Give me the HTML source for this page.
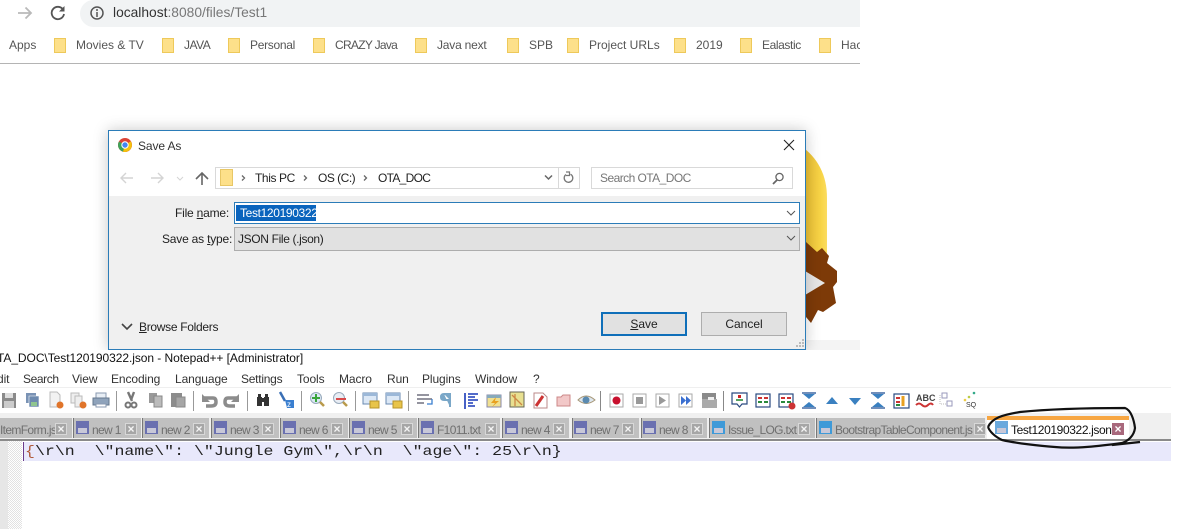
<!DOCTYPE html>
<html><head><meta charset="utf-8"><style>
html,body{margin:0;padding:0;background:#fff}
#p{position:relative;width:1195px;height:529px;overflow:hidden;background:#fff;font-family:"Liberation Sans",sans-serif;font-size:12px;color:#222}
#p div,#p span.a,#p svg.a{position:absolute}
.t{white-space:nowrap;line-height:16px}
.bm{top:37px;color:#555;font-size:12px}
.fd{top:38px;width:10px;height:13px;background:#fde08a;border:1px solid #eec95a;box-sizing:content-box}
.m{top:371px;color:#333;font-size:12px;letter-spacing:-.1px}
.tab{top:418px;height:20px;background:#c0c0c0;border-left:1px solid #777;border-right:1px solid #eee}
.tt{top:422px;color:#6f6f6f;font-size:12px;letter-spacing:-.65px}
.x{top:423px;width:10px;height:10px;background:#a6a6a6;border:1px solid #d8d8d8;color:#f4f4f4;font:bold 12px/10px "Liberation Sans",sans-serif;text-align:center}
.sv{top:421px;width:13px;height:13px;background:#6a70b0}
.sv:after{content:"";position:absolute;left:2px;right:2px;bottom:1px;height:5px;background:#c8c8d8}
u{text-decoration:underline}
</style></head><body><div id="p">

<!-- chrome -->
<div style="left:80px;top:0;width:780px;height:27px;background:#f1f3f4;border-radius:14px 0 0 14px"></div>
<svg class="a" style="left:16px;top:4px" width="18" height="18" viewBox="0 0 18 18"><path d="M2 9H15M9.500 3.500L15 9L9.500 14.500" fill="none" stroke="#b9b9b9" stroke-width="1.800"/></svg>
<svg class="a" style="left:49px;top:4px" width="18" height="18" viewBox="0 0 18 18"><path d="M14 5.500A6.200 6.200 0 1 0 15 10" fill="none" stroke="#555" stroke-width="1.800"/><path d="M15.500 2V7.500H10Z" fill="#555"/></svg>
<svg class="a" style="left:89px;top:5px" width="16" height="16" viewBox="0 0 16 16"><circle cx="8" cy="8" r="6" fill="none" stroke="#555" stroke-width="1.500"/><path d="M8 7V12M8 4V6" stroke="#555" stroke-width="1.500"/></svg>
<div class="t" style="left:113px;top:5px;font-size:13.800px;color:#777"><span style="color:#333">localhost</span>:8080/files/Test1</div>

<div class="t bm" style="left:9px">Apps</div>
<div class="fd" style="left:54px"></div><div class="t bm" style="left:76px">Movies &amp; TV</div>
<div class="fd" style="left:162px"></div><div class="t bm" style="left:184px;letter-spacing:-.5px">JAVA</div>
<div class="fd" style="left:228px"></div><div class="t bm" style="left:250px;letter-spacing:-.3px">Personal</div>
<div class="fd" style="left:313px"></div><div class="t bm" style="left:335px;letter-spacing:-.7px">CRAZY Java</div>
<div class="fd" style="left:415px"></div><div class="t bm" style="left:437px;letter-spacing:-.2px">Java next</div>
<div class="fd" style="left:507px"></div><div class="t bm" style="left:529px">SPB</div>
<div class="fd" style="left:567px"></div><div class="t bm" style="left:589px">Project URLs</div>
<div class="fd" style="left:674px"></div><div class="t bm" style="left:696px">2019</div>
<div class="fd" style="left:740px"></div><div class="t bm" style="left:762px;letter-spacing:-.4px">Ealastic</div>
<div class="fd" style="left:819px"></div><div class="t bm" style="left:841px;width:19px;overflow:hidden">Hack</div>
<div style="left:0;top:63px;width:860px;height:1px;background:#b4b4b4"></div>

<!-- background art -->
<svg class="a" style="left:780px;top:130px" width="90" height="230" viewBox="0 0 90 230">
<defs><linearGradient id="y" x1="0" x2="1" y1="0" y2="0"><stop offset="0" stop-color="#e8b92e"/><stop offset=".8" stop-color="#f8d548"/><stop offset="1" stop-color="#fbdc60"/></linearGradient></defs>
<path d="M20 15C38 28 47 45 47 68V126H20Z" fill="url(#y)"/>
<path d="M20 108L26 112L37 122L42 118L49 126L47 133L57 141L57 152L53 157L56 173L43 182L38 180L31 193L26 187L20 188Z" fill="#7d3a08"/>
<path d="M20 138L45 153L20 168Z" fill="#e6e6e6"/>
<rect x="26" y="210" width="54" height="10" fill="#f4f4f4"/>
</svg>

<!-- dialog -->
<div style="left:108px;top:130px;width:698px;height:220px;box-shadow:0 0 14px rgba(0,0,0,.22)"></div>
<div style="left:108px;top:130px;width:696px;height:218px;background:#fff;border:1px solid #2b7cb8"></div>
<div style="left:109px;top:196px;width:696px;height:153px;background:#f0f0f0"></div>
<svg class="a" style="left:118px;top:138px" width="14" height="14" viewBox="0 0 14 14"><circle cx="7" cy="7" r="7" fill="#db4437"/><path d="M7 7L1 3.500A7 7 0 0 0 5 13.700Z" fill="#3da35a"/><path d="M7 7L12.800 3.200A7 7 0 0 1 5 13.700Z" fill="#f4c20d"/><circle cx="7" cy="7" r="3.200" fill="#4285f4" stroke="#fff"/></svg>
<div class="t" style="left:138px;top:138px;color:#333;letter-spacing:-.1px">Save As</div>
<svg class="a" style="left:783px;top:139px" width="12" height="12" viewBox="0 0 12 12"><path d="M1 1L11 11M11 1L1 11" stroke="#222" stroke-width="1.100"/></svg>

<svg class="a" style="left:120px;top:171px" width="90" height="14" viewBox="0 0 90 14"><path d="M1 7H13M6 2L1 7L6 12M31 7H43M38 2L43 7L38 12" fill="none" stroke="#d4d4d4" stroke-width="1.400"/><path d="M57 6L60 9L63 6" fill="none" stroke="#d4d4d4"/><path d="M82 14V2M76 8L82 2L88 8" fill="none" stroke="#666" stroke-width="1.600"/></svg>
<div style="left:215px;top:167px;width:363px;height:20px;border:1px solid #d9d9d9;background:#fff"></div>
<div style="left:220px;top:169px;width:11px;height:15px;background:#fde08a;border:1px solid #e8c766"></div>
<div style="left:558px;top:168px;width:1px;height:20px;background:#d9d9d9"></div>
<svg class="a" style="left:240px;top:174px" width="130" height="8" viewBox="0 0 130 8"><path d="M2 1.500L4.500 4L2 6.500M64 1.500L66.500 4L64 6.500M124 1.500L126.500 4L124 6.500" fill="none" stroke="#666" stroke-width="1.300"/></svg>
<div class="t" style="left:255px;top:170px;color:#222;letter-spacing:-.4px">This PC</div>
<div class="t" style="left:318px;top:170px;color:#222;letter-spacing:-.5px">OS (C:)</div>
<div class="t" style="left:378px;top:170px;color:#222;letter-spacing:-.7px">OTA_DOC</div>
<svg class="a" style="left:544px;top:174px" width="9" height="7" viewBox="0 0 9 7"><path d="M1 1.500L4.500 5L8 1.500" fill="none" stroke="#666" stroke-width="1.500"/></svg>
<svg class="a" style="left:563px;top:171px" width="12" height="13" viewBox="0 0 12 13"><path d="M3 3.500A4.300 4.300 0 1 0 7.500 3.200" fill="none" stroke="#777" stroke-width="1.300"/><path d="M3 1H6.500V4.500H3" fill="none" stroke="#777" stroke-width="1.200"/></svg>
<div style="left:591px;top:167px;width:200px;height:20px;border:1px solid #d9d9d9;background:#fff"></div>
<div class="t" style="left:600px;top:170px;color:#777;letter-spacing:-.55px">Search OTA_DOC</div>
<svg class="a" style="left:771px;top:172px" width="14" height="13" viewBox="0 0 14 13"><circle cx="8.500" cy="5" r="3.600" fill="none" stroke="#666" stroke-width="1.300"/><path d="M6 8L2 12" stroke="#666" stroke-width="1.800"/></svg>

<div class="t" style="left:175px;top:205px;color:#222;letter-spacing:-.2px">File <u>n</u>ame:</div>
<div style="left:234px;top:202px;width:564px;height:20px;background:#fff;border:1px solid #2b7cb8"></div>
<div class="t" style="left:236px;top:205px;width:76px;padding-left:4px;background:#0a64bd;color:#fff;letter-spacing:-.35px">Test120190322</div>
<svg class="a" style="left:786px;top:210px" width="10" height="6" viewBox="0 0 10 6"><path d="M1 1L5 5L9 1" fill="none" stroke="#555"/></svg>
<div class="t" style="left:162px;top:231px;color:#222;letter-spacing:-.2px">Save as <u>t</u>ype:</div>
<div style="left:234px;top:227px;width:564px;height:22px;background:#e1e1e1;border:1px solid #adadad"></div>
<div class="t" style="left:238px;top:231px;color:#222;letter-spacing:-.35px">JSON File (.json)</div>
<svg class="a" style="left:786px;top:235px" width="10" height="6" viewBox="0 0 10 6"><path d="M1 1L5 5L9 1" fill="none" stroke="#555"/></svg>

<svg class="a" style="left:121px;top:323px" width="12" height="8" viewBox="0 0 12 8"><path d="M1 1L6 6L11 1" fill="none" stroke="#444" stroke-width="1.600"/></svg>
<div class="t" style="left:139px;top:319px;color:#222;letter-spacing:-.3px"><u>B</u>rowse Folders</div>
<div style="left:601px;top:312px;width:82px;height:20px;background:#e1e1e1;border:2px solid #0f6fb9"></div>
<div class="t" style="left:601px;top:316px;width:86px;text-align:center;color:#222"><u>S</u>ave</div>
<div style="left:701px;top:312px;width:84px;height:22px;background:#e1e1e1;border:1px solid #adadad"></div>
<div class="t" style="left:701px;top:316px;width:86px;text-align:center;color:#222">Cancel</div>
<svg class="a" style="left:794px;top:338px" width="10" height="10"><path d="M8 1h2v2H8zM5 4h2v2H5zM8 4h2v2H8zM2 7h2v2H2zM5 7h2v2H5zM8 7h2v2H8z" fill="#bbb"/></svg>

<!-- notepad++ -->
<div style="left:0;top:350px;width:1171px;height:179px;background:#fff"></div>
<div class="t" style="left:-3px;top:350px;color:#111;font-size:12px;letter-spacing:-.06px">TA_DOC\Test120190322.json - Notepad++ [Administrator]</div>
<div class="t m" style="left:-3px">dit</div>
<div class="t m" style="left:23px;letter-spacing:-.4px">Search</div>
<div class="t m" style="left:72px">View</div>
<div class="t m" style="left:111px">Encoding</div>
<div class="t m" style="left:175px">Language</div>
<div class="t m" style="left:241px;letter-spacing:-.25px">Settings</div>
<div class="t m" style="left:297px">Tools</div>
<div class="t m" style="left:339px">Macro</div>
<div class="t m" style="left:387px">Run</div>
<div class="t m" style="left:422px">Plugins</div>
<div class="t m" style="left:475px">Window</div>
<div class="t m" style="left:533px">?</div>

<div style="left:0;top:387px;width:1171px;height:1px;background:#efefef"></div>
<div style="left:0;top:413px;width:1171px;height:26px;background:#f0f0f0"></div>

<svg class="a" style="left:0;top:390px" width="1000" height="22" viewBox="0 0 1000 22">
<path d="M2 3H16V18H2Z" fill="#8a8a8a"/><rect x="5" y="3" width="8" height="5" fill="#ddd"/><rect x="4" y="11" width="10" height="7" fill="#ccc"/>
<path d="M26 3H36V13H26Z" fill="#7a93b5"/><path d="M29 6H39V17H29Z" fill="#6d8aaf" stroke="#fff" stroke-width=".6"/><rect x="31" y="12" width="6" height="4" fill="#8fc58f"/>
<path d="M50 2H57L60 5V17H50Z" fill="#f2f2f2" stroke="#bbb"/><circle cx="60" cy="15" r="3.500" fill="#e0742a"/>
<path d="M71 3H79V13H71Z" fill="#eee" stroke="#bbb"/><path d="M75 6H82V17H75Z" fill="#eee" stroke="#bbb"/><circle cx="83" cy="15" r="3.500" fill="#e0742a"/>
<path d="M96 3H106V8H96Z" fill="#e8eef5" stroke="#8a9ab0"/><path d="M93 8H109V15H93Z" fill="#8fa3bb" stroke="#66788f"/><rect x="96" y="14" width="10" height="3" fill="#fff" stroke="#8a9ab0"/>
<rect x="116" y="1" width="1" height="20" fill="#999"/>
<path d="M134 2L131 10M128 2L132 11" stroke="#777" stroke-width="2.400" fill="none"/><circle cx="128" cy="15" r="2.500" fill="none" stroke="#777" stroke-width="2"/><circle cx="134" cy="15" r="2.500" fill="none" stroke="#777" stroke-width="2"/>
<path d="M149 3H157V13H149Z" fill="#999"/><path d="M154 6H162V17H154Z" fill="#bbb" stroke="#888"/>
<path d="M171 3H182V17H171Z" fill="#8c8c8c"/><path d="M176 7H185V17H176Z" fill="#a6a6a6" stroke="#888"/>
<rect x="193" y="1" width="1" height="20" fill="#999"/>
<path d="M203 8H213Q216 8 216 12Q216 16 211 16H206" fill="none" stroke="#8c8c8c" stroke-width="3.500"/><path d="M202 4V12H210Z" fill="#8c8c8c"/>
<path d="M238 8H228Q225 8 225 12Q225 16 230 16H235" fill="none" stroke="#8c8c8c" stroke-width="3.500"/><path d="M239 4V12H231Z" fill="#8c8c8c"/>
<rect x="247" y="1" width="1" height="20" fill="#999"/>
<path d="M257 7H262V16H257ZM264 7H269V16H264ZM258 4H261V7H258ZM265 4H268V7H265ZM261 8H265V12H261Z" fill="#333"/>
<path d="M280 2L285 11" stroke="#3a6fb5" stroke-width="2.500"/><path d="M285 10H294V18H287Z" fill="#3a7fd0"/><text x="287" y="17" font-size="8" fill="#fff" font-family="Liberation Sans">z</text>
<rect x="301" y="1" width="1" height="20" fill="#999"/>
<circle cx="316" cy="8" r="5.500" fill="#dbe8f4" stroke="#9ab"/><path d="M320 12L324 16" stroke="#b99a4a" stroke-width="2.500"/><path d="M316 4V12M312 8H320" stroke="#3aa53a" stroke-width="2"/>
<circle cx="339" cy="8" r="5.500" fill="#e8edf4" stroke="#9ab"/><path d="M343 12L347 16" stroke="#b99a4a" stroke-width="2.500"/><path d="M336 9H346" stroke="#d84a4a" stroke-width="2"/>
<rect x="355" y="1" width="1" height="20" fill="#999"/>
<path d="M363 3H377V14H363Z" fill="#dce8f6" stroke="#6a8ab0"/><path d="M363 3H377V6H363Z" fill="#9cb8d8"/><rect x="370" y="11" width="9" height="7" fill="#e8c44a" stroke="#b8942a"/>
<path d="M386 3H400V14H386Z" fill="#dce8f6" stroke="#6a8ab0"/><path d="M386 3H400V6H386Z" fill="#9cb8d8"/><rect x="393" y="11" width="9" height="7" fill="#e8c44a" stroke="#b8942a"/>
<rect x="408" y="1" width="1" height="20" fill="#999"/>
<path d="M417 5H429M417 9H432M417 13H424" stroke="#556" stroke-width="1.300"/><path d="M432 9V14H427" fill="none" stroke="#3a7fd0" stroke-width="1.300"/>
<path d="M444 4H450V17M450 4V17M444 4Q441 4 441 7Q441 10 444 10H450" fill="#7aa7c8" stroke="#7aa7c8" stroke-width="2"/>
<path d="M465 3V19M468 4H478M468 7H475M468 10H478M468 13H473M468 16H475" stroke="#1a3ab8" stroke-width="1.600"/>
<rect x="487" y="5" width="14" height="12" fill="#f0e090" stroke="#88a"/><rect x="487" y="5" width="14" height="3" fill="#8ab"/><path d="M496 7L491 13H495L492 17L499 11H495Z" fill="#e8a020"/>
<rect x="510" y="2" width="14" height="15" fill="#e8e090" stroke="#665"/><path d="M512 5L522 15M515 4V16" stroke="#c84" stroke-width="1.300"/>
<path d="M534 3H543L547 7V18H534Z" fill="#fff" stroke="#b88"/><path d="M536 16L543 6" stroke="#c33" stroke-width="3"/>
<path d="M557 7H561L563 5H570V16H557Z" fill="#f2c8c8" stroke="#c88"/>
<path d="M578 10Q586 2 595 10Q586 17 578 10Z" fill="#dde6ee" stroke="#a89878"/><circle cx="586" cy="10" r="3.500" fill="#5a8ab0"/>
<rect x="600" y="1" width="1" height="20" fill="#888"/>
<rect x="610" y="4" width="13" height="13" fill="#fff" stroke="#aaa"/><circle cx="616.500" cy="10.500" r="4" fill="#c8102e"/>
<rect x="633" y="4" width="13" height="13" fill="#fff" stroke="#aaa"/><rect x="636" y="7" width="7" height="7" fill="#999"/>
<rect x="656" y="4" width="13" height="13" fill="#fff" stroke="#aaa"/><path d="M659 6L666 10.500L659 15Z" fill="#999"/>
<rect x="679" y="4" width="13" height="13" fill="#fff" stroke="#aaa"/><path d="M681 6L686 10.500L681 15ZM686 6L691 10.500L686 15Z" fill="#3a6fd0"/>
<rect x="702" y="3" width="14" height="6" fill="#8a8a8a"/><rect x="702" y="9" width="15" height="9" fill="#aaa"/><path d="M708 7H714V10H708Z" fill="#eee"/>
<rect x="723" y="1" width="1" height="20" fill="#888"/>
<path d="M732 3H747V14H742L739.500 17L737 14H732Z" fill="#fff" stroke="#2a4a80" stroke-width="1.200"/><rect x="738" y="5" width="3" height="3" fill="#c22"/><path d="M736 10H743" stroke="#2a8a3a" stroke-width="1.600"/>
<rect x="756" y="4" width="14" height="13" fill="#fff" stroke="#2a4a80" stroke-width="1.200"/><path d="M758 8H762M764 8H768" stroke="#c33" stroke-width="2"/><path d="M758 12H762M764 12H768" stroke="#2a8a3a" stroke-width="2"/>
<rect x="779" y="4" width="14" height="13" fill="#fff" stroke="#2a4a80" stroke-width="1.200"/><path d="M781 8H785M787 8H791" stroke="#c33" stroke-width="2"/><path d="M781 12H785M787 12H791" stroke="#2a8a3a" stroke-width="2"/><circle cx="792" cy="16" r="3.500" fill="#c33"/>
<path d="M803 4H815L809 9ZM803 17H815L809 12Z" fill="#3a80c0"/><path d="M802 3H816M802 18H816" stroke="#1a4a90" stroke-width="1.300"/>
<path d="M826 14L832 7L838 14Z" fill="#3a80c0"/>
<path d="M849 8L855 15L861 8Z" fill="#3a80c0"/>
<path d="M872 4H884L878 9ZM872 17H884L878 12Z" fill="#3a80c0"/><path d="M871 3H885M871 18H885" stroke="#1a4a90" stroke-width="1.300"/>
<rect x="894" y="4" width="15" height="14" fill="#fff" stroke="#2a4a80" stroke-width="1.200"/><path d="M896 8H900M896 12H900" stroke="#c33" stroke-width="2"/><path d="M896 15H900" stroke="#2a8a3a" stroke-width="2"/><path d="M903 6V16" stroke="#e8a020" stroke-width="3"/>
<text x="916" y="11" font-size="9" font-weight="bold" fill="#444" font-family="Liberation Sans">ABC</text><path d="M916 15Q919 12 922 15T928 15T933 15" fill="none" stroke="#c33" stroke-width="2"/>
<path d="M942 3H947V8H942ZM947 11H952V16H947Z" fill="#fff" stroke="#99b"/><path d="M940 5V14H946" fill="none" stroke="#bbb" stroke-dasharray="1 1"/>
<circle cx="974" cy="3" r="1.300" fill="#3a8"/><circle cx="969" cy="7" r="1.300" fill="#bc4"/><circle cx="965" cy="10" r="1.300" fill="#ec4"/><text x="966" y="17" font-size="7" fill="#333" font-family="Liberation Sans">SQ</text>
</svg>

<!-- tabs -->
<div class="tab" style="left:-2px;width:73px"></div>
<div class="tab" style="left:73px;width:67px"></div>
<div class="tab" style="left:142px;width:66px"></div>
<div class="tab" style="left:211px;width:67px"></div>
<div class="tab" style="left:280px;width:67px"></div>
<div class="tab" style="left:349px;width:67px"></div>
<div class="tab" style="left:418px;width:81px"></div>
<div class="tab" style="left:502px;width:66px"></div>
<div class="tab" style="left:572px;width:66px"></div>
<div class="tab" style="left:641px;width:65px"></div>
<div class="tab" style="left:709px;width:105px"></div>
<div class="tab" style="left:816px;width:168px"></div>
<div style="left:987px;top:416px;width:142px;height:24px;background:#fff"></div>
<div style="left:987px;top:416px;width:142px;height:4px;background:#f7a642"></div>

<div class="t tt" style="left:0">ItemForm.js</div><div class="x" style="left:55px">×</div>
<div class="sv" style="left:76px"></div><div class="t tt" style="left:92px">new 1</div><div class="x" style="left:125px">×</div>
<div class="sv" style="left:145px"></div><div class="t tt" style="left:161px">new 2</div><div class="x" style="left:193px">×</div>
<div class="sv" style="left:214px"></div><div class="t tt" style="left:230px">new 3</div><div class="x" style="left:262px">×</div>
<div class="sv" style="left:283px"></div><div class="t tt" style="left:299px">new 6</div><div class="x" style="left:331px">×</div>
<div class="sv" style="left:352px"></div><div class="t tt" style="left:368px">new 5</div><div class="x" style="left:401px">×</div>
<div class="sv" style="left:421px"></div><div class="t tt" style="left:437px">F1011.txt</div><div class="x" style="left:485px">×</div>
<div class="sv" style="left:505px"></div><div class="t tt" style="left:521px">new 4</div><div class="x" style="left:553px">×</div>
<div class="sv" style="left:574px"></div><div class="t tt" style="left:590px">new 7</div><div class="x" style="left:622px">×</div>
<div class="sv" style="left:643px"></div><div class="t tt" style="left:659px">new 8</div><div class="x" style="left:691px">×</div>
<div class="sv" style="left:712px;background:#3f9ad8"></div><div class="t tt" style="left:728px">Issue_LOG.txt</div><div class="x" style="left:798px">×</div>
<div class="sv" style="left:819px;background:#3f9ad8"></div><div class="t tt" style="left:835px">BootstrapTableComponent.js</div><div class="x" style="left:974px">×</div>
<div class="sv" style="left:995px;background:#6aa9dd"></div><div class="t tt" style="left:1011px;color:#111;letter-spacing:-.38px">Test120190322.json</div>
<div class="x" style="left:1112px;background:#a8687c;border-color:#a8687c;color:#fff">×</div>

<div style="left:0;top:439px;width:1171px;height:2px;background:#8a8a8a"></div>

<!-- editor -->
<div style="left:0;top:441px;width:8px;height:88px;background:#e6e6e6"></div>
<div style="left:8px;top:441px;width:14px;height:88px;background:#f0f0f0;background-image:repeating-conic-gradient(#e2e2e2 0 25%,#fff 0 50%);background-size:2px 2px"></div>
<div style="left:23px;top:442px;width:1148px;height:19px;background:#e8e8fb"></div>
<div style="left:23px;top:442px;width:1px;height:19px;background:#6a3a8a"></div>
<div class="t" style="left:25px;top:444px;font-family:'Liberation Mono',monospace;font-size:14px;color:#222;white-space:pre;transform:scaleX(1.183);transform-origin:0 0"><span style="color:#b05a3a">{</span>\r\n  \"name\": \"Jungle Gym\",\r\n  \"age\": 25\r\n}</div>

<!-- scribble -->
<svg class="a" style="left:0;top:0" width="1195" height="529" viewBox="0 0 1195 529"><path d="M988 427C992 418 1002 415 1020 412C1050 409 1095 408 1125 408C1131 410 1134 420 1135 428C1134 436 1128 441 1122 443C1100 446 1075 449 1055 447C1040 446 1015 443 1002 440C994 436 990 432 988 427M1112 445L1140 442" fill="none" stroke="#111" stroke-width="2.200"/></svg>

</div></body></html>
